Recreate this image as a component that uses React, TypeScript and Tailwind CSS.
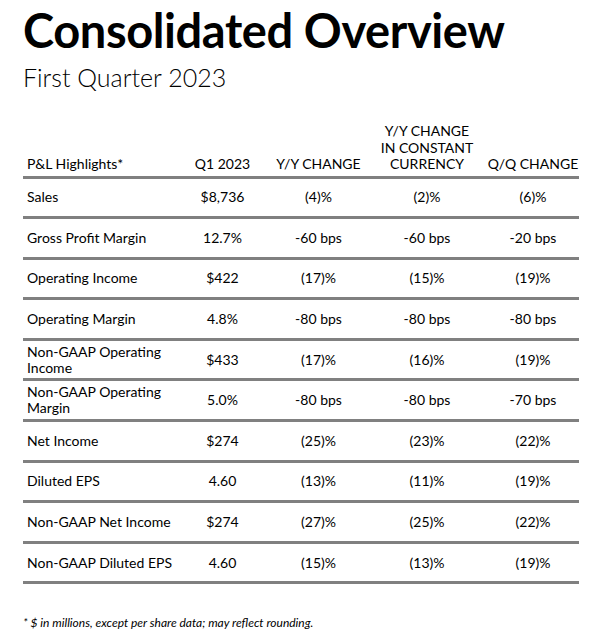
const rows: { label: string; q1: string; yy: string; cc: string; qq: string }[] = [
  { label: 'Sales', q1: '$8,736', yy: '(4)%', cc: '(2)%', qq: '(6)%' },
  { label: 'Gross Profit Margin', q1: '12.7%', yy: '-60 bps', cc: '-60 bps', qq: '-20 bps' },
  { label: 'Operating Income', q1: '$422', yy: '(17)%', cc: '(15)%', qq: '(19)%' },
  { label: 'Operating Margin', q1: '4.8%', yy: '-80 bps', cc: '-80 bps', qq: '-80 bps' },
  { label: 'Non-GAAP Operating\nIncome', q1: '$433', yy: '(17)%', cc: '(16)%', qq: '(19)%' },
  { label: 'Non-GAAP Operating\nMargin', q1: '5.0%', yy: '-80 bps', cc: '-80 bps', qq: '-70 bps' },
  { label: 'Net Income', q1: '$274', yy: '(25)%', cc: '(23)%', qq: '(22)%' },
  { label: 'Diluted EPS', q1: '4.60', yy: '(13)%', cc: '(11)%', qq: '(19)%' },
  { label: 'Non-GAAP Net Income', q1: '$274', yy: '(27)%', cc: '(25)%', qq: '(22)%' },
  { label: 'Non-GAAP Diluted EPS', q1: '4.60', yy: '(15)%', cc: '(13)%', qq: '(19)%' },
]

const cols = 'grid grid-cols-[152px_95px_97px_120px_92px]'

export default function App() {
  return (
    <div className="w-[610px] h-[639px] bg-white text-black px-[23px] pt-[4px] font-['Lato','Liberation_Sans',sans-serif]">
      {/* Title */}
      <h1 className="text-[47px] leading-[52px] font-bold tracking-[-0.4px]">Consolidated Overview</h1>
      <p className="text-[25px] leading-[32px] font-light mt-[5px]">First Quarter 2023</p>

      {/* Table */}
      <div className="mt-[30px] w-[556px] text-[14px]">
        <div className={`${cols} items-end pb-[3px] leading-[16.5px] border-b-[3px] border-[#808080]`}>
          <div className="pl-[4px] whitespace-nowrap">P&amp;L Highlights*</div>
          <div className="text-center">Q1 2023</div>
          <div className="text-center">Y/Y CHANGE</div>
          <div className="text-center">
            Y/Y CHANGE
            <br />
            IN CONSTANT
            <br />
            CURRENCY
          </div>
          <div className="text-center">Q/Q CHANGE</div>
        </div>
        {rows.map((r) => (
          <div key={r.label} className={`${cols} items-center h-[40.6px] leading-[16px] border-b-[3px] border-[#808080]`}>
            <div className="pl-[4px] whitespace-pre-line">{r.label}</div>
            <div className="text-center">{r.q1}</div>
            <div className="text-center">{r.yy}</div>
            <div className="text-center">{r.cc}</div>
            <div className="text-center">{r.qq}</div>
          </div>
        ))}
      </div>

      <p className="mt-[30px] text-[12px] italic">* $ in millions, except per share data; may reflect rounding.</p>
    </div>
  )
}
